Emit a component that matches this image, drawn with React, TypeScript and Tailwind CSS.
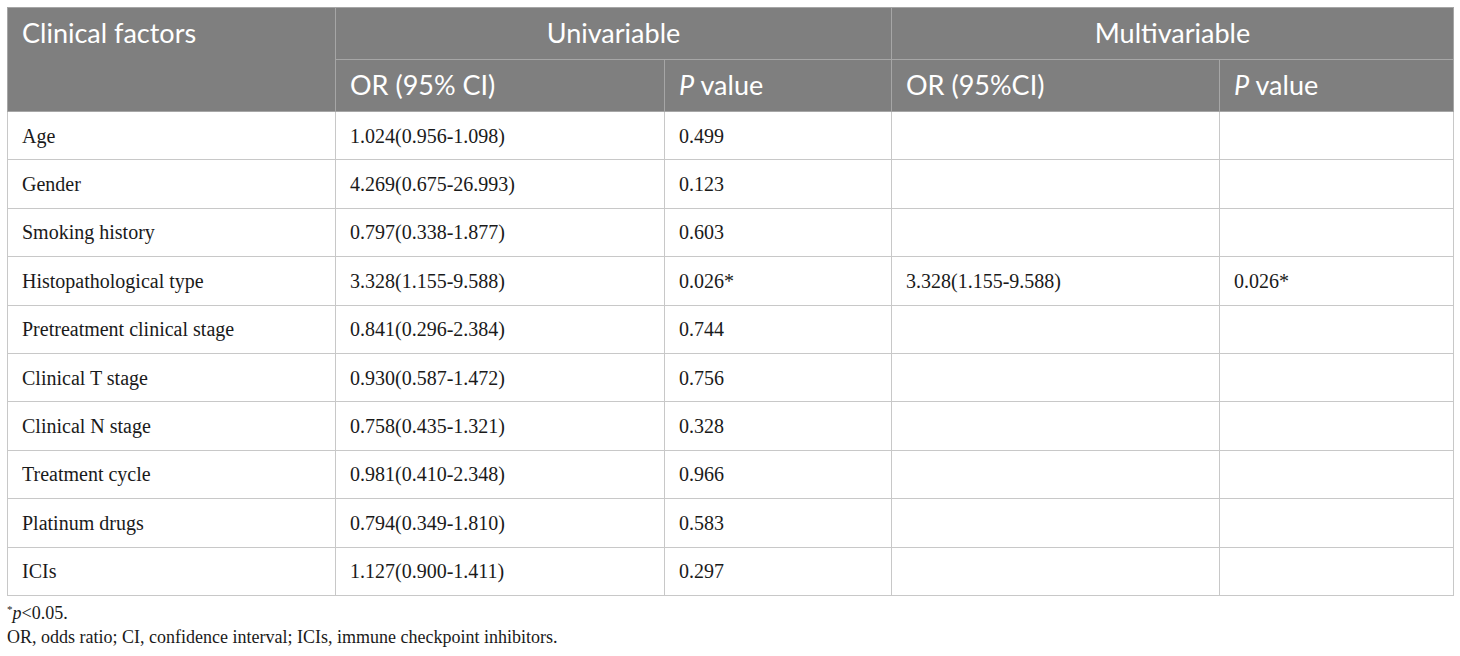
const rows: [string, string, string, string, string][] = [
  ["Age", "1.024(0.956-1.098)", "0.499", "", ""],
  ["Gender", "4.269(0.675-26.993)", "0.123", "", ""],
  ["Smoking history", "0.797(0.338-1.877)", "0.603", "", ""],
  ["Histopathological type", "3.328(1.155-9.588)", "0.026*", "3.328(1.155-9.588)", "0.026*"],
  ["Pretreatment clinical stage", "0.841(0.296-2.384)", "0.744", "", ""],
  ["Clinical T stage", "0.930(0.587-1.472)", "0.756", "", ""],
  ["Clinical N stage", "0.758(0.435-1.321)", "0.328", "", ""],
  ["Treatment cycle", "0.981(0.410-2.348)", "0.966", "", ""],
  ["Platinum drugs", "0.794(0.349-1.810)", "0.583", "", ""],
  ["ICIs", "1.127(0.900-1.411)", "0.297", "", ""],
];

export default function App() {
  return (
    <div className="w-[1460px] h-[656px] bg-white px-[7px] pt-[7px]">
      <table className="w-[1446px] border-collapse table-fixed">
        <colgroup>
          <col className="w-[328px]" />
          <col className="w-[329px]" />
          <col className="w-[227px]" />
          <col className="w-[328px]" />
          <col className="w-[234px]" />
        </colgroup>
        <thead className="bg-[#7f7f7f] text-white font-['Lato',sans-serif] text-[27px]">
          <tr className="h-[52px]">
            <th rowSpan={2} className="border border-[#a6a6a6] align-top text-left font-normal px-[14px] pt-[5px]">
              Clinical factors
            </th>
            <th colSpan={2} className="border border-[#a6a6a6] font-normal text-center">
              Univariable
            </th>
            <th colSpan={2} className="border border-[#a6a6a6] font-normal text-center">
              Multivariable
            </th>
          </tr>
          <tr className="h-[52px]">
            <th className="border border-[#a6a6a6] text-left font-normal px-[14px]">OR (95% CI)</th>
            <th className="border border-[#a6a6a6] text-left font-normal px-[14px]">
              <i>P</i> value
            </th>
            <th className="border border-[#a6a6a6] text-left font-normal px-[14px]">OR (95%CI)</th>
            <th className="border border-[#a6a6a6] text-left font-normal px-[14px]">
              <i>P</i> value
            </th>
          </tr>
        </thead>
        <tbody className="font-['Liberation_Serif',serif] text-[20px] text-[#1a1a1a]">
          {rows.map((r) => (
            <tr key={r[0]} className="h-[48.4px]">
              {r.map((c, i) => (
                <td key={i} className="border border-[#c8c8c8] px-[14px] align-middle">
                  {c}
                </td>
              ))}
            </tr>
          ))}
        </tbody>
      </table>
      <div className="font-['Liberation_Serif',serif] text-[18px] text-[#1a1a1a] mt-[5px] leading-[24px]">
        <div>
          <sup className="text-[11px]">*</sup>
          <i>p</i>&lt;0.05.
        </div>
        <div>OR, odds ratio; CI, confidence interval; ICIs, immune checkpoint inhibitors.</div>
      </div>
    </div>
  );
}
